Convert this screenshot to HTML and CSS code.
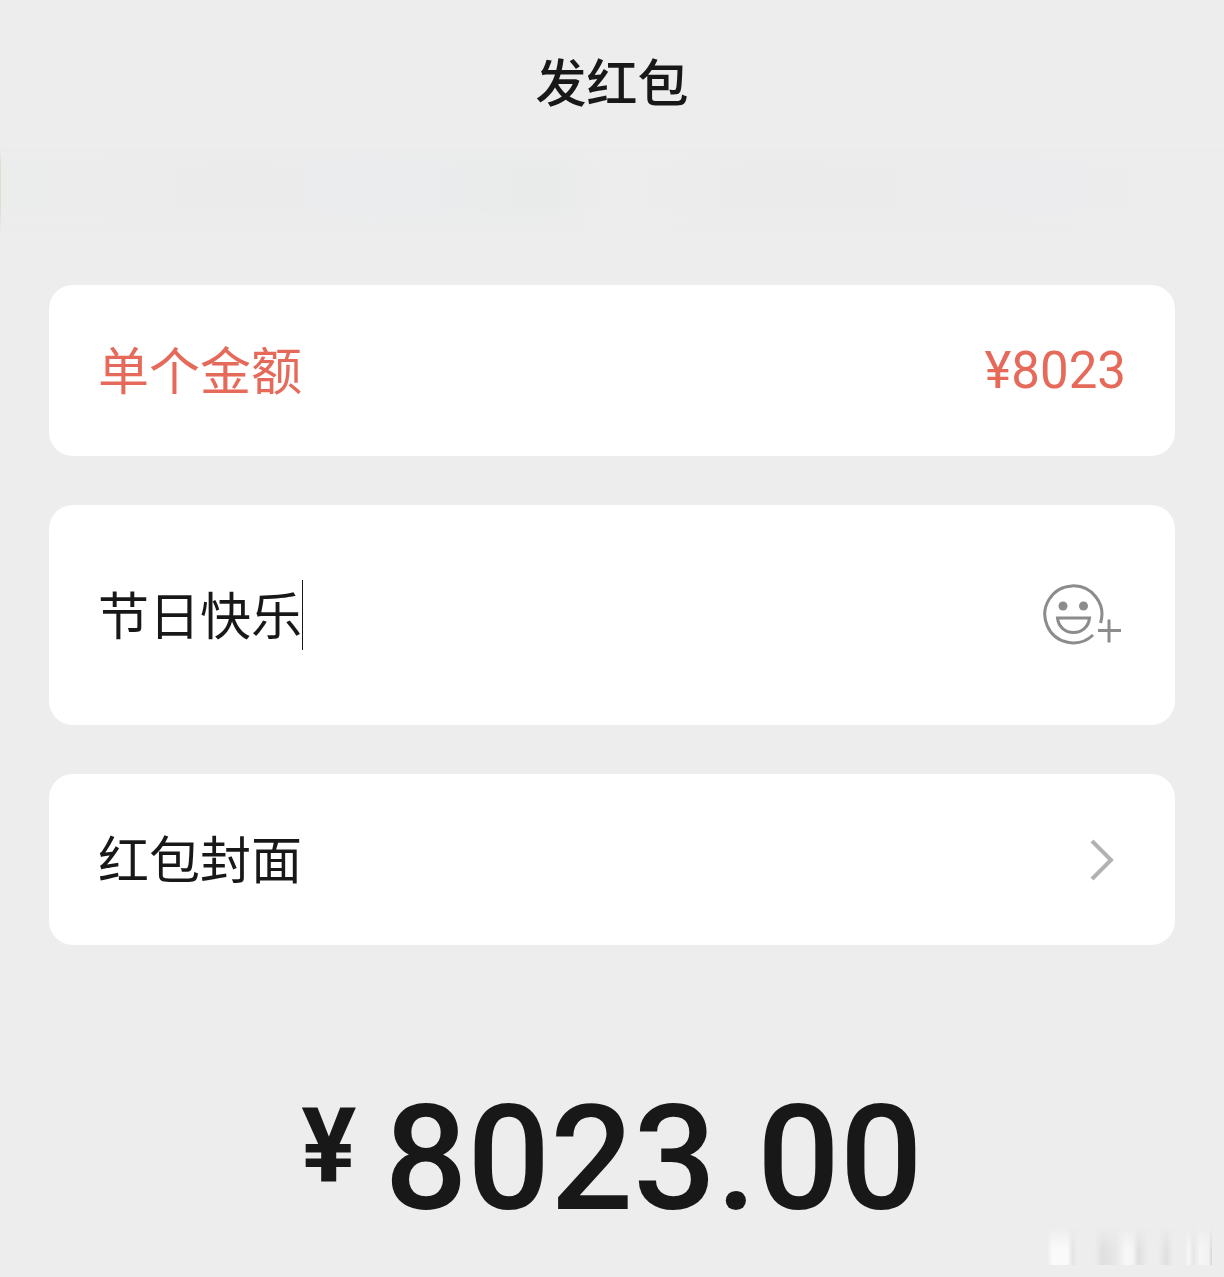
FILE: index.html
```html
<!DOCTYPE html>
<html lang="zh-CN">
<head>
  <meta charset="UTF-8">
  <meta name="viewport" content="width=device-width, initial-scale=1.0">
  <title>发红包</title>
  <link rel="stylesheet" href="styles.css">
</head>
<body>
  <header>
    <h1>发红包</h1>
  </header>
  <div class="notice-bar"></div>

  <main class="container">
    <div class="card amount">
      <label for="amount">单个金额</label>
      <input type="text" id="amount" value="¥8023">
    </div>

    <div class="card greeting">
      <input type="text" id="greeting" aria-label="祝福语" value="节日快乐">
      <button type="button" class="emoji-button" aria-label="添加表情">
        <svg width="80" height="64" viewBox="0 0 80 64" fill="none" stroke="#8c8c8c" stroke-width="3">
          <path d="M51 52A28.500 28.500 0 1 1 58.500 40"/>
          <circle cx="21" cy="23" r="4.500" fill="#8c8c8c" stroke="none"/>
          <circle cx="41.500" cy="23" r="4.500" fill="#8c8c8c" stroke="none"/>
          <path d="M15.500 35H47.500C46.500 44 40 49.500 31.500 49.500S16.500 44 15.500 35Z"/>
          <path d="M56 47.500H79M67 36.500V59.500"/>
        </svg>
      </button>
    </div>

    <a href="#" class="card cover">
      <span>红包封面</span>
      <svg width="24" height="42" viewBox="0 0 24 42" fill="none" stroke="#b2b2b2" stroke-width="4">
        <path d="M2 2L21 21L2 40"/>
      </svg>
    </a>

    <p class="total"><span class="currency">¥</span><span>8023.00</span></p>
  </main>

  <div class="watermark"></div>
</body>
</html>
```

FILE: styles.css
```css
* {
  box-sizing: border-box;
}
body {
  position: relative;
  margin: 0;
  min-height: 100vh;
  background-color: #ededed;
  color: #181818;
  font-family: Roboto, "Noto Sans CJK SC", sans-serif;
  font-size: 51px;
  line-height: 70px;
}
header {
  padding: 50px 48px 28px;
  text-align: center;
}
h1 {
  margin: 0;
  font-size: 51px;
  font-weight: 500;
}
.notice-bar {
  height: 86px;
  border-left: 1px solid #e3d9cf;
  background: linear-gradient(90deg, #ebecec, #ececec 8%, #ebebeb 20%, #ebecee 30%, #e9ebea 45%, #ededed 50%, #ebebeb 62%, #ececee 85%, #ededed);
  mask-image: linear-gradient(transparent, black 20%, black 70%, transparent);
}
.container {
  display: flex;
  flex-direction: column;
  gap: 49px;
  padding: 51px 49px 0;
}
input,
button {
  margin: 0;
  padding: 0;
  border: none;
  outline: none;
  background: none;
  color: inherit;
  font: inherit;
}
.card {
  display: flex;
  align-items: center;
  justify-content: space-between;
  min-height: 171px;
  padding: 0 49px;
  border-radius: 24px;
  background-color: white;
}
.card label,
.card span {
  flex: none;
  padding-top: 4px;
}
.amount {
  color: #e66a5a;
}
.amount input {
  flex: 1;
  min-width: 0;
  height: 70px;
  text-align: right;
}
.greeting {
  min-height: 220px;
}
/* the right border stands in for the text cursor */
.greeting input {
  field-sizing: content;
  height: 70px;
  padding-top: 6px;
  border-right: 1px solid #181818;
}
.emoji-button {
  display: flex;
  margin-right: 4px;
  cursor: pointer;
}
.cover {
  color: inherit;
  text-decoration: none;
}
.cover svg {
  margin-right: 12px;
}
.total {
  display: flex;
  align-items: flex-start;
  justify-content: center;
  gap: 28px;
  margin: 62px 0 0;
  font-size: 146px;
  font-weight: 500;
  line-height: 208px;
}
.currency {
  font-size: 103px;
  font-weight: 700;
  line-height: 180px;
}
.watermark {
  position: absolute;
  right: 12px;
  bottom: 12px;
  width: 168px;
  height: 38px;
  background: linear-gradient(90deg, #ededed 2%, #fafafa 5%, #fafafa 14%, #e4e4e4 17%, #ededed 20%, #ededed 30%, #dfdfdf 35%, #e8e8e8 43%, #f8f8f8 49%, #f4f4f4 53%, #dfdfdf 56%, #ededed 62%, #ededed 68%, #e0e0e0 73%, #ededed 77%, #ededed 84%, #f7f7f7 86%, #e6e6e6 89%, #f6f6f6 93%, #f2f2f2 98%, #d5d5d5);
  mask-image: linear-gradient(transparent, black 60%);
}
```
